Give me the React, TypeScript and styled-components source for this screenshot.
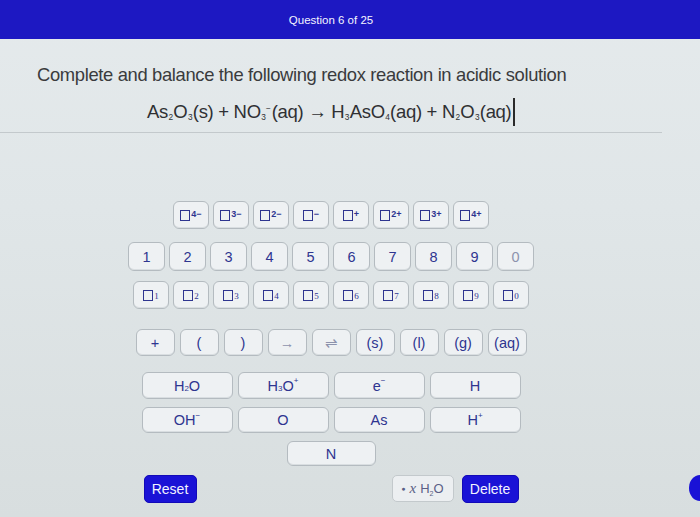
import React from "react";
import styled, { createGlobalStyle } from "styled-components";

const GlobalStyle = createGlobalStyle`
  html, body { margin: 0; padding: 0; }
  body {
    width: 700px;
    height: 517px;
    overflow: hidden;
    background: linear-gradient(180deg, #e5eaec 0%, #e0e6e8 40%, #d8dedf 100%);
    font-family: "Liberation Sans", Arial, sans-serif;
  }
`;

const Header = styled.header`
  height: 39px;
  background: #1d18c2;
`;

const HeaderInner = styled.div`
  width: 662px;
  height: 100%;
  display: flex;
  align-items: center;
  justify-content: center;
  color: #f4f4ff;
  font-size: 11.5px;
`;

const Prompt = styled.section`
  height: 94px;
  border-bottom: 1px solid #c3c9cc;
  box-sizing: border-box;
`;

const Page = styled.div`
  width: 662px;
`;

const Title = styled.h1`
  margin: 0;
  padding: 25px 0 0 37px;
  font-weight: 400;
  font-size: 18.4px;
  line-height: 22px;
  letter-spacing: -0.35px;
  color: #3a3b3d;
  white-space: nowrap;
`;

const Equation = styled.div`
  margin-top: 10px;
  display: flex;
  justify-content: center;
  align-items: center;
  font-size: 18.5px;
  line-height: 24px;
  color: #2f3033;
  letter-spacing: -0.3px;
  white-space: nowrap;
`;

const Sub = styled.sub`
  font-size: 0.45em;
  vertical-align: -0.15em;
  margin: 0 0.5px;
`;

const Sup = styled.sup`
  font-size: 0.45em;
  vertical-align: 0.9em;
  margin-right: 1px;
`;

const Caret = styled.span`
  display: inline-block;
  width: 1.5px;
  height: 28px;
  margin-left: 2px;
  background: #2a2a2a;
`;

const Keypad = styled.section`
  padding-top: 68px;
  display: flex;
  flex-direction: column;
  align-items: center;
`;

const Row = styled.div<{ $gap: number; $top: number }>`
  display: flex;
  gap: ${(p) => p.$gap}px;
  margin-top: ${(p) => p.$top}px;
`;

const Key = styled.button<{ $w: number; $h?: number; $fade?: boolean }>`
  width: ${(p) => p.$w}px;
  height: ${(p) => p.$h ?? 28}px;
  padding: 0;
  display: flex;
  align-items: center;
  justify-content: center;
  background: #eef1f3;
  border: 1px solid #b4bbc0;
  border-radius: 6px;
  box-shadow: inset 0 -1px 0 #d9dee1;
  color: ${(p) => (p.$fade ? "#8d93ad" : "#2e3590")};
  font-family: "Liberation Sans", Arial, sans-serif;
  font-size: 14.5px;
`;

const Square = styled.span`
  display: inline-block;
  width: 10px;
  height: 11px;
  box-sizing: border-box;
  border: 1.4px solid #2e3590;
`;

const Charge = styled.span`
  align-self: flex-start;
  margin-top: 7px;
  margin-left: 1px;
  font-size: 9px;
  font-weight: 700;
`;

const Index = styled.span`
  align-self: flex-end;
  margin-bottom: 7px;
  margin-left: 1px;
  font-family: "Liberation Serif", "Times New Roman", serif;
  font-size: 9px;
`;

const Tiny = styled.span<{ $up?: boolean }>`
  font-size: 0.55em;
  position: relative;
  top: ${(p) => (p.$up ? "-0.6em" : "0.35em")};
`;

const Footer = styled.div`
  width: 375px;
  margin-top: 9px;
  display: flex;
  justify-content: space-between;
`;

const FooterGroup = styled.div`
  display: flex;
  gap: 8px;
`;

const ActionButton = styled.button<{ $w: number }>`
  width: ${(p) => p.$w}px;
  height: 28px;
  padding: 0;
  border: 1px solid #1209b8;
  border-radius: 5px;
  background: #1a12d6;
  color: #f2f3ff;
  font-family: "Liberation Sans", Arial, sans-serif;
  font-size: 14px;
`;

const WaterKey = styled.button`
  width: 62px;
  height: 27px;
  padding: 0;
  border: 1px solid #c3c9cc;
  border-radius: 5px;
  background: #eceff1;
  color: #5b5f86;
  font-family: "Liberation Sans", Arial, sans-serif;
  font-size: 13px;
  display: flex;
  align-items: center;
  justify-content: center;
  gap: 4px;
`;

const Italic = styled.span`
  font-family: "Liberation Serif", serif;
  font-style: italic;
  font-size: 15px;
`;

const Dot = styled.span`
  font-size: 7px;
`;

const EdgeBubble = styled.div`
  position: absolute;
  left: 689px;
  top: 475px;
  width: 22px;
  height: 26px;
  border-radius: 50%;
  background: #1a12d6;
`;

const charges = ["4−", "3−", "2−", "−", "+", "2+", "3+", "4+"];
const digits = ["1", "2", "3", "4", "5", "6", "7", "8", "9", "0"];
const symbols: { label: string; fade?: boolean }[] = [
  { label: "+" },
  { label: "(" },
  { label: ")" },
  { label: "→", fade: true },
  { label: "⇌", fade: true },
  { label: "(s)" },
  { label: "(l)" },
  { label: "(g)" },
  { label: "(aq)" },
];

export default function App() {
  return (
    <>
      <GlobalStyle />
      <Header>
        <HeaderInner>Question 6 of 25</HeaderInner>
      </Header>
      <Page>
        <Prompt>
          <Title>Complete and balance the following redox reaction in acidic solution</Title>
          <Equation>
            <span>
              As<Sub>2</Sub>O<Sub>3</Sub>(s) + NO<Sub>3</Sub>
              <Sup>−</Sup>(aq) → H<Sub>3</Sub>AsO<Sub>4</Sub>(aq) + N<Sub>2</Sub>O
              <Sub>3</Sub>(aq)
            </span>
            <Caret />
          </Equation>
        </Prompt>
        <Keypad>
          <Row $gap={4} $top={0}>
            {charges.map((c) => (
              <Key key={c} $w={36}>
                <Square />
                <Charge>{c}</Charge>
              </Key>
            ))}
          </Row>
          <Row $gap={4} $top={13}>
            {digits.map((d) => (
              <Key key={d} $w={37} $h={29} $fade={d === "0"}>
                {d}
              </Key>
            ))}
          </Row>
          <Row $gap={4} $top={10}>
            {digits.map((d) => (
              <Key key={d} $w={36}>
                <Square />
                <Index>{d}</Index>
              </Key>
            ))}
          </Row>
          <Row $gap={5} $top={20}>
            {symbols.map((s) => (
              <Key key={s.label} $w={39} $h={27} $fade={s.fade}>
                {s.label}
              </Key>
            ))}
          </Row>
          <Row $gap={5} $top={16}>
            <Key $w={91} $h={27}>
              H<Tiny>2</Tiny>O
            </Key>
            <Key $w={91} $h={27}>
              H<Tiny>3</Tiny>O<Tiny $up>+</Tiny>
            </Key>
            <Key $w={91} $h={27}>
              e<Tiny $up>−</Tiny>
            </Key>
            <Key $w={91} $h={27}>
              H
            </Key>
          </Row>
          <Row $gap={5} $top={8}>
            <Key $w={91} $h={26}>
              OH<Tiny $up>−</Tiny>
            </Key>
            <Key $w={91} $h={26}>
              O
            </Key>
            <Key $w={91} $h={26}>
              As
            </Key>
            <Key $w={91} $h={26}>
              H<Tiny $up>+</Tiny>
            </Key>
          </Row>
          <Row $gap={5} $top={8}>
            <Key $w={89} $h={25}>
              N
            </Key>
          </Row>
          <Footer>
            <ActionButton $w={53}>Reset</ActionButton>
            <FooterGroup>
              <WaterKey>
                <Dot>●</Dot>
                <Italic>x</Italic>
                <span>
                  H<Tiny>2</Tiny>O
                </span>
              </WaterKey>
              <ActionButton $w={57}>Delete</ActionButton>
            </FooterGroup>
          </Footer>
        </Keypad>
      </Page>
      <EdgeBubble />
    </>
  );
}
